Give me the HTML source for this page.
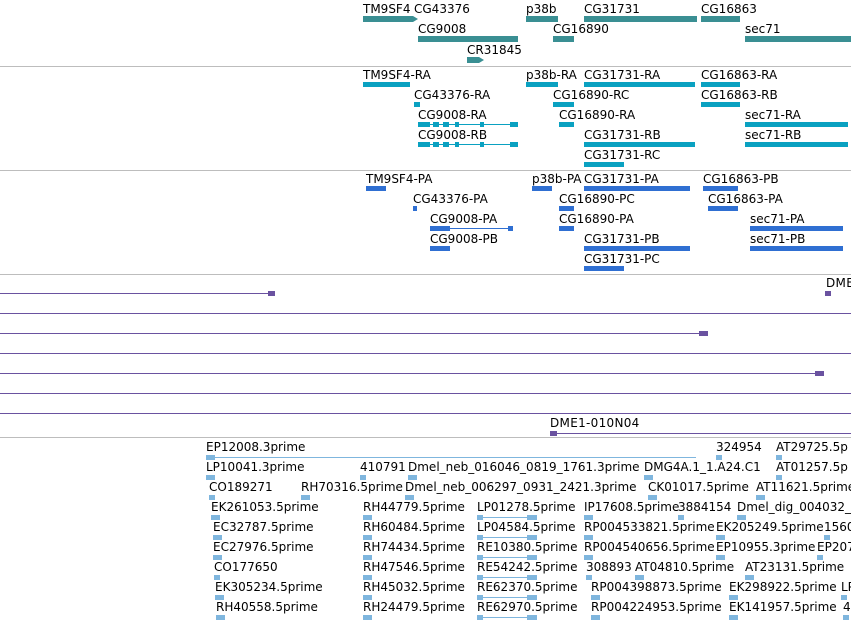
<!DOCTYPE html>
<html><head><meta charset="utf-8"><style>
body{margin:0;width:851px;height:622px;background:#fff;position:relative;overflow:hidden;font-family:"DejaVu Sans","Liberation Sans",sans-serif;font-size:12px;color:#000}
.l{position:absolute;white-space:nowrap;line-height:13px;margin-top:1px}
.b{position:absolute}
.s{position:absolute;left:0;width:851px;height:1px;background:#bdbdbd}
</style></head><body>
<div class="s" style="top:66px"></div>
<div class="s" style="top:170px"></div>
<div class="s" style="top:274px"></div>
<div class="s" style="top:437px"></div>
<div id="c"></div>
<script>
var c=document.getElementById('c'),h='';
function L(x,y,t,st){h+='<div class="l" style="left:'+x+'px;top:'+y+'px;'+(st||'')+'">'+t+'</div>';}
function B(x,y,w,ht,col){h+='<div class="b" style="left:'+x+'px;top:'+y+'px;width:'+w+'px;height:'+ht+'px;background:'+col+'"></div>';}
function T(x,y,col,dir,sz){sz=sz||5;var s=dir>0?'border-left:'+sz+'px solid '+col:'border-right:'+sz+'px solid '+col;h+='<div class="b" style="left:'+x+'px;top:'+(y-0.5)+'px;width:0;height:0;border-top:'+(sz/2+0.5)+'px solid transparent;border-bottom:'+(sz/2+0.5)+'px solid transparent;'+s+'"></div>';}
var t='#3a8f93';
[[363,2,'TM9SF4',413],[414,2,'CG43376',null],[526,2,'p38b',558],[584,2,'CG31731',697],[701,2,'CG16863',740],[418,22,'CG9008',518],[553,22,'CG16890',574],[745,22,'sec71',851],[467,43,'CR31845',479]].forEach(function(g){L(g[0],g[1],g[2]);if(g[3])B(g[0],g[1]+14,g[3]-g[0],6,t);});
T(413,16,t,1,5);T(479,57,t,1,5);
var cy='#0aa1c1';
function R(lx,row,n,x1,x2,base,col,gap){var y=base+row*20;L(lx,y,n);var by=y+14;if(gap){B(x1,by+2,x2-x1,1,col);}else B(x1,by,x2-x1,5,col);}
[[363,0,'TM9SF4-RA',363,410],[526,0,'p38b-RA',526,558],[584,0,'CG31731-RA',584,695],[701,0,'CG16863-RA',701,740],[414,1,'CG43376-RA',414,420],[553,1,'CG16890-RC',553,574],[701,1,'CG16863-RB',701,740],[418,2,'CG9008-RA',418,518,1],[559,2,'CG16890-RA',559,574],[745,2,'sec71-RA',745,848],[418,3,'CG9008-RB',418,518,1],[584,3,'CG31731-RB',584,695],[745,3,'sec71-RB',745,848],[584,4,'CG31731-RC',584,624]].forEach(function(g){R(g[0],g[1],g[2],g[3],g[4],68,cy,g[5]);});
[[418,122],[418,142]].forEach(function(p){B(418,p[1],12,5,cy);B(433,p[1],6,5,cy);B(443,p[1],6,5,cy);B(455,p[1],4,5,cy);B(480,p[1],4,5,cy);B(510,p[1],8,5,cy);});
var bl='#2f6fd2';
[[366,0,'TM9SF4-PA',366,386],[532,0,'p38b-PA',532,552],[584,0,'CG31731-PA',584,690],[703,0,'CG16863-PB',703,738],[413,1,'CG43376-PA',413,417],[559,1,'CG16890-PC',559,574],[708,1,'CG16863-PA',708,738],[430,2,'CG9008-PA',430,513,1],[559,2,'CG16890-PA',559,574],[750,2,'sec71-PA',750,843],[430,3,'CG9008-PB',430,450],[584,3,'CG31731-PB',584,690],[750,3,'sec71-PB',750,843],[584,4,'CG31731-PC',584,624]].forEach(function(g){R(g[0],g[1],g[2],g[3],g[4],172,bl,g[5]);});
B(430,226,20,5,bl);B(508,226,5,5,bl);
var pu='#6a52a0';
B(0,293,270,1,pu);B(268,291,7,5,pu);
L(826,276,'DME',"letter-spacing:0.3px;");B(825,291,6,5,pu);
B(0,313,851,1,pu);B(0,333,702,1,pu);B(699,331,9,5,pu);B(0,353,851,1,pu);B(0,373,818,1,pu);B(815,371,9,5,pu);B(0,393,851,1,pu);B(0,413,851,1,pu);
L(550,416,'DME1-010N04',"letter-spacing:0.3px;");B(550,433,301,1,pu);B(550,431,7,5,pu);
var lb='#7fb6de';
var rows=[
[[206,'EP12008.3prime'],[716,'324954'],[776,'AT29725.5p']],
[[206,'LP10041.3prime'],[360,'410791'],[408,'Dmel_neb_016046_0819_1761.3prime'],[644,'DMG4A.1_1.A24.C1'],[776,'AT01257.5p']],
[[209,'CO189271'],[301,'RH70316.5prime'],[405,'Dmel_neb_006297_0931_2421.3prime'],[648,'CK01017.5prime'],[756,'AT11621.5prime']],
[[211,'EK261053.5prime'],[363,'RH44779.5prime'],[477,'LP01278.5prime'],[584,'IP17608.5prime'],[678,'3884154'],[737,'Dmel_dig_004032_']],
[[213,'EC32787.5prime'],[363,'RH60484.5prime'],[477,'LP04584.5prime'],[584,'RP004533821.5prime'],[716,'EK205249.5prime'],[824,'1560']],
[[213,'EC27976.5prime'],[363,'RH74434.5prime'],[477,'RE10380.5prime'],[584,'RP004540656.5prime'],[716,'EP10955.3prime'],[817,'EP207']],
[[214,'CO177650'],[363,'RH47546.5prime'],[477,'RE54242.5prime'],[586,'308893'],[635,'AT04810.5prime'],[745,'AT23131.5prime']],
[[215,'EK305234.5prime'],[363,'RH45032.5prime'],[477,'RE62370.5prime'],[591,'RP004398873.5prime'],[729,'EK298922.5prime'],[841,'LP']],
[[216,'RH40558.5prime'],[363,'RH24479.5prime'],[477,'RE62970.5prime'],[591,'RP004224953.5prime'],[729,'EK141957.5prime'],[843,'4']]];
rows.forEach(function(r,i){var y=440+i*20;r.forEach(function(e){L(e[0],y,e[1]);var w=(e[1].length>10?9:6);if(e[0]==477&&i>=3){B(477,y+17,60,1,lb);B(477,y+15,6,5,lb);B(527,y+15,10,5,lb);}else B(e[0],y+15,w,5,lb);});});
B(206,457,490,1,lb);
c.innerHTML=h;
</script>
</body></html>
